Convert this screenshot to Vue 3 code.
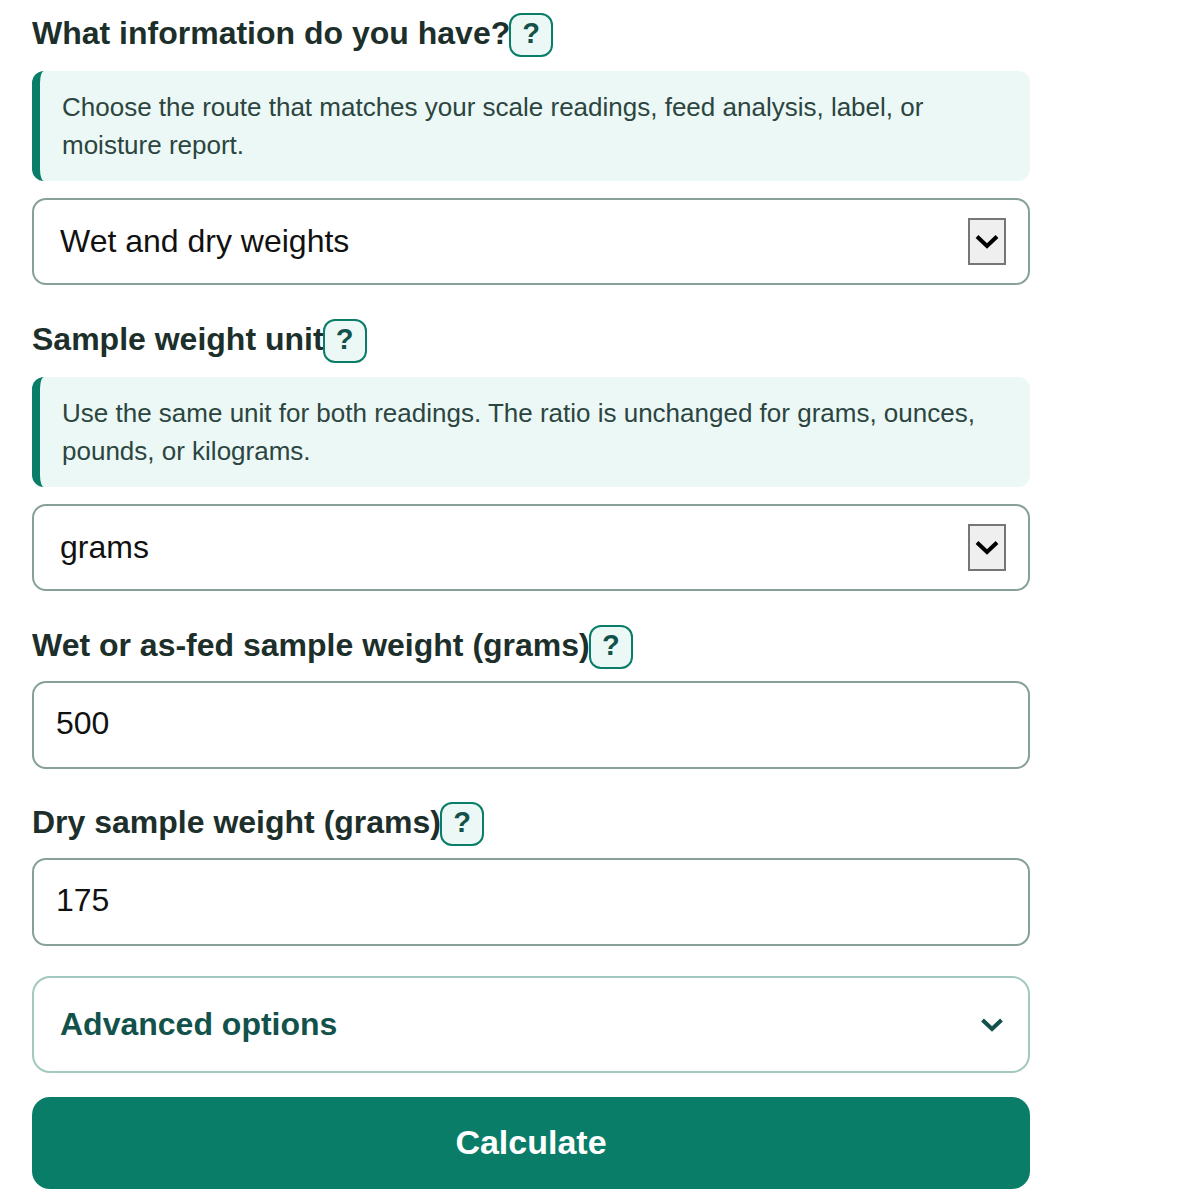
<script setup>
import { ref } from 'vue'
const route = ref('Wet and dry weights')
const unit = ref('grams')
const wet = ref('500')
const dry = ref('175')
</script>

<template>
  <main class="form">
    <div class="label-row"><label>What information do you have?</label><button class="help" type="button">?</button></div>
    <p class="hint">Choose the route that matches your scale readings, feed analysis, label, or moisture report.</p>
    <div class="select-wrap">
      <select v-model="route"><option>Wet and dry weights</option></select>
      <span class="arrow">
        <svg width="24" height="16" viewBox="0 0 24 16"><path d="M2 2.5 L12 12 L22 2.5" fill="none" stroke="#000" stroke-width="4"/></svg>
      </span>
    </div>

    <div class="label-row second"><label>Sample weight unit</label><button class="help" type="button">?</button></div>
    <p class="hint">Use the same unit for both readings. The ratio is unchanged for grams, ounces, pounds, or kilograms.</p>
    <div class="select-wrap">
      <select v-model="unit"><option>grams</option></select>
      <span class="arrow">
        <svg width="24" height="16" viewBox="0 0 24 16"><path d="M2 2.5 L12 12 L22 2.5" fill="none" stroke="#000" stroke-width="4"/></svg>
      </span>
    </div>

    <div class="label-row third"><label>Wet or as-fed sample weight (grams)</label><button class="help" type="button">?</button></div>
    <input v-model="wet" class="num" type="text" />

    <div class="label-row fourth"><label>Dry sample weight (grams)</label><button class="help" type="button">?</button></div>
    <input v-model="dry" class="num" type="text" />

    <div class="advanced">
      <span>Advanced options</span>
      <svg width="24" height="16" viewBox="0 0 24 16"><path d="M2.5 3 L12 12 L21.5 3" fill="none" stroke="#12524a" stroke-width="4"/></svg>
    </div>

    <button class="calc" type="button">Calculate</button>
  </main>
</template>

<style>
html, body { margin: 0; background: #fff; }
</style>

<style scoped>
.form {
  width: 998px;
  margin-left: 32px;
  padding-top: 13px;
  display: flex;
  flex-direction: column;
  font-family: "Liberation Sans", Arial, sans-serif;
}
.label-row {
  display: flex;
  align-items: center;
  height: 44px;
  margin-bottom: 14px;
}
.label-row.second { margin-top: 34px; }
.label-row.third { margin-top: 34px; margin-bottom: 12px; }
.label-row.fourth { margin-top: 33px; margin-bottom: 12px; }
label {
  padding-bottom: 5px;
  font-size: 32px;
  font-weight: 700;
  color: #1d2f2b;
  line-height: 40px;
}
.help {
  box-sizing: border-box;
  width: 44px;
  height: 44px;
  padding: 0 0 4px;
  margin-left: -1px;
  border: 2px solid #0a7d68;
  border-radius: 12px;
  background: #ebf8f5;
  color: #12524a;
  font-family: inherit;
  font-size: 29px;
  font-weight: 700;
}
.hint {
  box-sizing: border-box;
  margin: 0 0 17px;
  height: 110px;
  padding: 17px 40px 0 22px;
  border-left: 8px solid #0a7d68;
  border-radius: 12px;
  background: #ebf8f5;
  color: #2c4540;
  font-size: 26px;
  line-height: 38px;
}
.select-wrap { position: relative; }
select {
  display: block;
  box-sizing: border-box;
  width: 100%;
  height: 87px;
  padding: 0 26px 2px;
  border: 2px solid #87a09a;
  border-radius: 14px;
  background: #fff;
  color: #111;
  font-family: inherit;
  font-size: 32px;
  appearance: none;
}
.arrow {
  position: absolute;
  top: 20px;
  right: 24px;
  box-sizing: border-box;
  width: 38px;
  height: 47px;
  display: flex;
  align-items: center;
  justify-content: center;
  background: #efefef;
  border: 2px solid #767676;
}
.num {
  box-sizing: border-box;
  width: 100%;
  height: 88px;
  padding: 0 22px 3px;
  border: 2px solid #87a09a;
  border-radius: 14px;
  color: #111;
  font-family: inherit;
  font-size: 32px;
}
.advanced {
  box-sizing: border-box;
  margin-top: 30px;
  height: 97px;
  padding: 0 24px 0 26px;
  display: flex;
  align-items: center;
  justify-content: space-between;
  border: 2px solid #a2c8bf;
  border-radius: 18px;
  color: #12524a;
  font-size: 32px;
  font-weight: 700;
}
.calc {
  margin-top: 24px;
  height: 92px;
  padding: 0 0 2px;
  border: 0;
  border-radius: 18px;
  background: #0a7d68;
  color: #fff;
  font-family: inherit;
  font-size: 34px;
  font-weight: 700;
}
</style>
